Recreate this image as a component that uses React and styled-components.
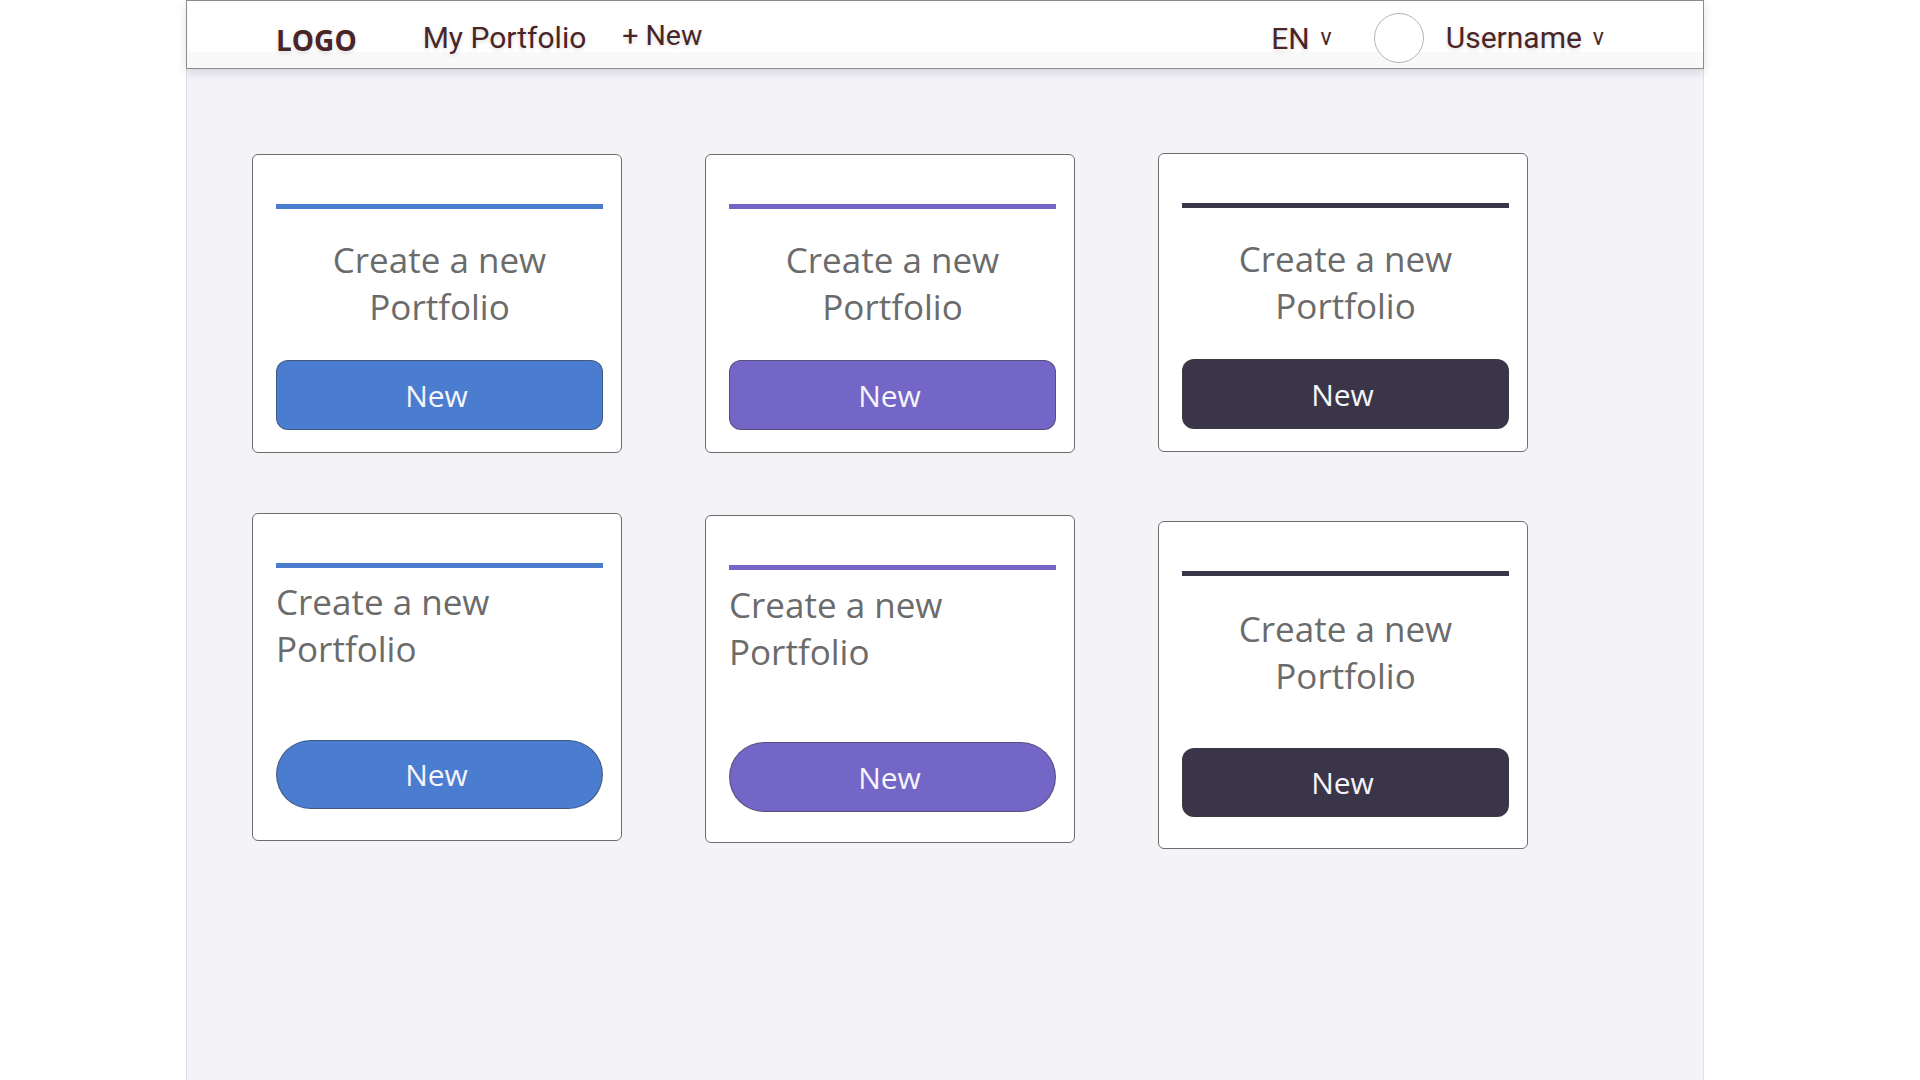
import React from "react";
import styled, { createGlobalStyle } from "styled-components";

const GlobalStyle = createGlobalStyle`
  body {
    margin: 0;
    background: #ffffff;
    font-family: "Open Sans", "Liberation Sans", sans-serif;
  }
`;

const tones = {
  blue: "#4a7cd0",
  purple: "#7466c6",
  dark: "#3b3549",
};

const cards = [
  { tone: "blue", align: "center", shift: 1, textGap: 27, buttonGap: 30, bottom: 22, round: 12, button: 70 },
  { tone: "purple", align: "center", shift: 1, textGap: 27, buttonGap: 30, bottom: 22, round: 12, button: 70 },
  { tone: "dark", align: "center", shift: 0, textGap: 27, buttonGap: 30, bottom: 22, round: 12, button: 70 },
  { tone: "blue", align: "left", shift: 0, textGap: 10, buttonGap: 68, bottom: 31, round: 35, button: 69 },
  { tone: "purple", align: "left", shift: 2, textGap: 11, buttonGap: 67, bottom: 30, round: 35, button: 70 },
  { tone: "dark", align: "center", shift: 8, textGap: 29, buttonGap: 49, bottom: 31, round: 12, button: 69 },
];

export default function App() {
  return (
    <>
      <GlobalStyle />
      <Frame>
        <NavBar>
          <Logo>LOGO</Logo>
          <NavLink $size={30} $gap={66} $drop={7}>My Portfolio</NavLink>
          <NavLink $size={28.5} $gap={36} $drop={4}>+ New</NavLink>
          <RightGroup>
            <NavLink $size={30} $gap={0} $drop={9}>EN</NavLink>
            <Caret>v</Caret>
            <Avatar />
            <NavLink $size={30} $gap={22} $drop={6}>Username</NavLink>
            <Caret>v</Caret>
          </RightGroup>
        </NavBar>
        <CardGrid>
          {cards.map((c, i) => (
            <Card key={i} $shift={c.shift} $bottom={c.bottom}>
              <Rule $color={tones[c.tone]} />
              <Title $align={c.align} $gap={c.textGap}>
                Create a new
                <br />
                Portfolio
              </Title>
              <NewButton
                $color={tones[c.tone]}
                $gap={c.buttonGap}
                $round={c.round}
                $height={c.button}
              >
                New
              </NewButton>
            </Card>
          ))}
        </CardGrid>
      </Frame>
    </>
  );
}

const Frame = styled.div`
  box-sizing: border-box;
  margin-left: 186px;
  width: 1518px;
  min-height: 100vh;
  background: #f3f3f8;
  border-left: 1px solid #dedee4;
  border-right: 1px solid #dedee4;
`;

const NavBar = styled.header`
  position: relative;
  z-index: 1;
  box-sizing: border-box;
  display: flex;
  align-items: center;
  height: 69px;
  margin: 0 -1px;
  padding: 0 99px 0 89px;
  border: 1px solid #8c8c8c;
  background: linear-gradient(to bottom, #ffffff 0, #ffffff 51px, #f9f9f9 51px);
  box-shadow: 0 4px 9px rgba(40, 40, 70, 0.14);
  color: #4a2527;
`;

const Logo = styled.div`
  font-family: "Open Sans", "Liberation Sans", sans-serif;
  font-weight: 700;
  font-size: 28px;
  line-height: 1;
  margin-top: 11px;
  text-shadow: 0 2px 4px rgba(0, 0, 0, 0.12);
`;

const NavLink = styled.a`
  font-family: Roboto, "Liberation Sans", sans-serif;
  font-size: ${(p) => p.$size}px;
  line-height: 1;
  margin-left: ${(p) => p.$gap}px;
  margin-top: ${(p) => p.$drop || 0}px;
  text-shadow: 0 2px 4px rgba(0, 0, 0, 0.14);
  cursor: pointer;
`;

const RightGroup = styled.div`
  display: flex;
  align-items: center;
  margin-left: auto;
`;

const Caret = styled.span`
  font-family: Roboto, "Liberation Sans", sans-serif;
  font-size: 23px;
  line-height: 1;
  margin-left: 11px;
  margin-top: 6px;
`;

const Avatar = styled.div`
  box-sizing: border-box;
  width: 50px;
  height: 50px;
  margin-left: 42px;
  margin-top: 6px;
  border-radius: 50%;
  border: 1px solid #b4b4b4;
  background: #ffffff;
`;

const CardGrid = styled.main`
  display: grid;
  grid-template-columns: repeat(3, 370px);
  column-gap: 83px;
  row-gap: 60px;
  align-items: start;
  padding: 84px 0 0 65px;
`;

const Card = styled.section`
  box-sizing: border-box;
  display: flex;
  flex-direction: column;
  margin-top: ${(p) => p.$shift}px;
  padding: 49px 18px ${(p) => p.$bottom}px 23px;
  background: #ffffff;
  border: 1px solid #6e6e6e;
  border-radius: 6px;
`;

const Rule = styled.div`
  height: 5px;
  background: ${(p) => p.$color};
`;

const Title = styled.h2`
  margin: ${(p) => p.$gap}px 0 0;
  font-family: "Open Sans", "Liberation Sans", sans-serif;
  font-weight: 400;
  font-size: 35px;
  line-height: 47px;
  color: #6b6b6b;
  text-align: ${(p) => p.$align};
`;

const NewButton = styled.button`
  box-sizing: border-box;
  width: 100%;
  height: ${(p) => p.$height}px;
  margin-top: ${(p) => p.$gap}px;
  padding: 0 6px 0 0;
  border: 1px solid rgba(60, 60, 60, 0.55);
  border-radius: ${(p) => p.$round}px;
  background: ${(p) => p.$color};
  color: #f5f5fb;
  font-family: "Open Sans", "Liberation Sans", sans-serif;
  font-size: 30px;
  cursor: pointer;
`;
